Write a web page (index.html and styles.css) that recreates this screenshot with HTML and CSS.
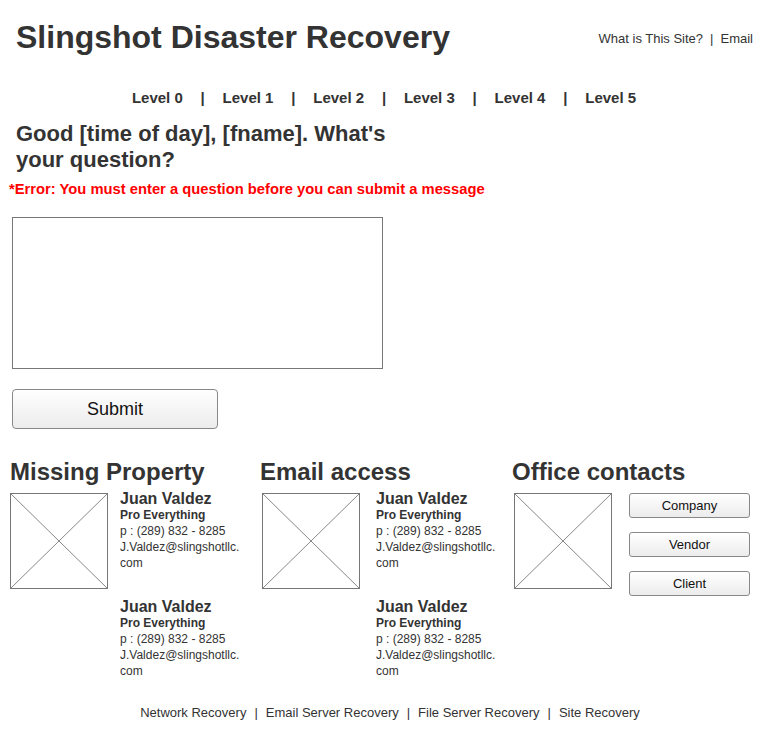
FILE: index.html
```html
<!DOCTYPE html>
<html lang="en">
<head>
<meta charset="utf-8">
<title>Slingshot Disaster Recovery</title>
<link rel="stylesheet" href="styles.css">
</head>
<body>
<header class="top">
  <h1 class="site-title">Slingshot Disaster Recovery</h1>
  <nav class="util-links"><a href="#">What is This Site?</a><span class="sep">|</span><a href="#">Email</a></nav>
</header>
<nav class="levels">
  <a href="#">Level 0</a><span class="sep">|</span><a href="#">Level 1</a><span class="sep">|</span><a href="#">Level 2</a><span class="sep">|</span><a href="#">Level 3</a><span class="sep">|</span><a href="#">Level 4</a><span class="sep">|</span><a href="#">Level 5</a>
</nav>
<main class="content">
  <h2 class="greeting">Good [time of day], [fname]. What's your question?</h2>
  <p class="error">*Error: You must enter a question before you can submit a message</p>
  <textarea class="question"></textarea>
  <button class="submit">Submit</button>

  <section class="panels">
    <div class="panel">
      <h3 class="panel-title">Missing Property</h3>
      <div class="card">
        <div class="ph"><svg viewBox="0 0 100 100" preserveAspectRatio="none"><line x1="0" y1="0" x2="100" y2="100"/><line x1="100" y1="0" x2="0" y2="100"/></svg></div>
        <div class="contacts">
          <div class="contact">
            <div class="name">Juan Valdez</div>
            <div class="role">Pro Everything</div>
            <div class="line">p : (289) 832 - 8285</div>
            <div class="line">J.Valdez@slingshotllc.<wbr>com</div>
          </div>
          <div class="contact">
            <div class="name">Juan Valdez</div>
            <div class="role">Pro Everything</div>
            <div class="line">p : (289) 832 - 8285</div>
            <div class="line">J.Valdez@slingshotllc.<wbr>com</div>
          </div>
        </div>
      </div>
    </div>
    <div class="panel">
      <h3 class="panel-title panel-title--tight">Email access</h3>
      <div class="card">
        <div class="ph"><svg viewBox="0 0 100 100" preserveAspectRatio="none"><line x1="0" y1="0" x2="100" y2="100"/><line x1="100" y1="0" x2="0" y2="100"/></svg></div>
        <div class="contacts contacts--wide">
          <div class="contact">
            <div class="name">Juan Valdez</div>
            <div class="role">Pro Everything</div>
            <div class="line">p : (289) 832 - 8285</div>
            <div class="line">J.Valdez@slingshotllc.<wbr>com</div>
          </div>
          <div class="contact">
            <div class="name">Juan Valdez</div>
            <div class="role">Pro Everything</div>
            <div class="line">p : (289) 832 - 8285</div>
            <div class="line">J.Valdez@slingshotllc.<wbr>com</div>
          </div>
        </div>
      </div>
    </div>
    <div class="panel">
      <h3 class="panel-title panel-title--tight">Office contacts</h3>
      <div class="card">
        <div class="ph"><svg viewBox="0 0 100 100" preserveAspectRatio="none"><line x1="0" y1="0" x2="100" y2="100"/><line x1="100" y1="0" x2="0" y2="100"/></svg></div>
        <div class="office-buttons">
          <button class="small-btn">Company</button>
          <button class="small-btn">Vendor</button>
          <button class="small-btn">Client</button>
        </div>
      </div>
    </div>
  </section>
</main>
<footer class="foot">
  <a href="#">Network Recovery</a><span class="sep">|</span><a href="#">Email Server Recovery</a><span class="sep">|</span><a href="#">File Server Recovery</a><span class="sep">|</span><a href="#">Site Recovery</a>
</footer>
</body>
</html>
```

FILE: styles.css
```css
* { box-sizing: border-box; }

body {
  margin: 0;
  background: #fff;
  color: #333;
  font-family: "Liberation Sans", Arial, Helvetica, sans-serif;
}

a { color: inherit; text-decoration: none; }

.top {
  display: flex;
  justify-content: space-between;
  align-items: flex-start;
  padding: 19px 31px 0 16px;
}

.site-title {
  margin: 0;
  font-size: 32px;
  line-height: 37px;
  font-weight: bold;
  color: #333;
}

.util-links {
  margin-top: 12px;
  font-size: 13px;
  line-height: 15px;
  color: #333;
}

.util-links .sep { margin: 0 7px; }

.levels {
  margin-top: 33px;
  padding-right: 16px;
  text-align: center;
  font-size: 15px;
  line-height: 18px;
  font-weight: bold;
  color: #333;
}

.levels .sep { margin: 0 17.8px; }

.content {
  padding: 0;
}

.greeting {
  margin: 14px 0 0 16px;
  width: 400px;
  font-size: 22px;
  line-height: 26px;
  font-weight: bold;
  color: #333;
}

.error {
  margin: 8px 0 0 9px;
  font-size: 14.75px;
  line-height: 17px;
  font-weight: bold;
  color: #ff0000;
}

.question {
  display: block;
  margin: 19px 0 0 12px;
  width: 371px;
  height: 152px;
  border: 1px solid #777;
  border-radius: 0;
  resize: none;
  background: #fff;
}

.submit {
  display: block;
  margin: 20px 0 0 12px;
  width: 206px;
  height: 40px;
  border: 1px solid #888;
  border-radius: 4px;
  background: linear-gradient(#fff, #ececec);
  font-family: inherit;
  font-size: 18px;
  color: #111;
  padding: 0;
}

.panels {
  display: grid;
  grid-template-columns: 252px 252px 1fr;
  margin-top: 29px;
  padding-left: 10px;
}

.panel-title {
  margin: 0;
  font-size: 24px;
  line-height: 28px;
  font-weight: bold;
  color: #333;
}

.panel-title--tight { margin-left: -2px; }

.card {
  display: flex;
  align-items: flex-start;
  margin-top: 4px;
}

.ph {
  flex: none;
  width: 98px;
  height: 96px;
  margin-top: 3px;
  border: 1px solid #777;
  background: #fff;
}

.ph svg {
  display: block;
  width: 100%;
  height: 100%;
}

.ph line {
  stroke: #888;
  stroke-width: 1;
  vector-effect: non-scaling-stroke;
}

.contacts {
  margin-left: 12px;
  width: 138px;
  display: flex;
  flex-direction: column;
  gap: 27px;
}

.contacts--wide { margin-left: 16px; }

.name {
  font-size: 16px;
  line-height: 17px;
  font-weight: bold;
  color: #333;
}

.role {
  font-size: 12px;
  line-height: 16px;
  font-weight: bold;
  color: #333;
}

.line {
  font-size: 12px;
  line-height: 16px;
  color: #333;
}

.office-buttons {
  margin-left: 17px;
  margin-top: 3px;
  display: flex;
  flex-direction: column;
  gap: 14px;
}

.small-btn {
  width: 121px;
  height: 25px;
  border: 1px solid #888;
  border-radius: 3px;
  background: linear-gradient(#fff, #ececec);
  font-family: inherit;
  font-size: 13px;
  color: #111;
  padding: 0;
}

.foot {
  margin-top: 26px;
  padding-right: 4px;
  text-align: center;
  font-size: 13px;
  line-height: 16px;
  color: #333;
}

.foot .sep { margin: 0 8px; }
```
